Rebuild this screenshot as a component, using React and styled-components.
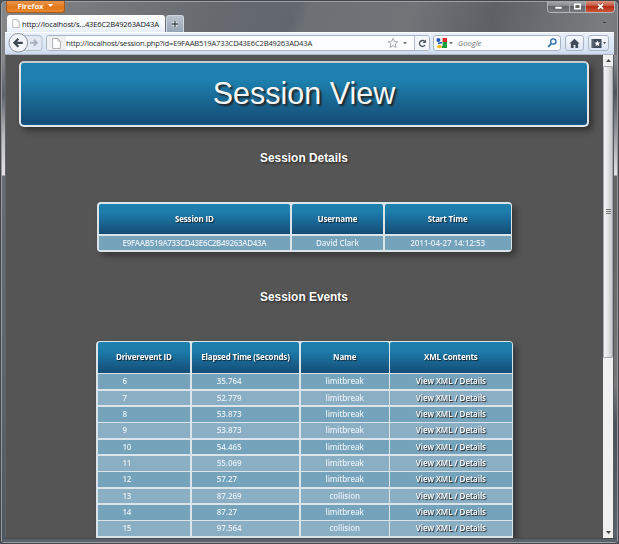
import React from "react";
import styled, { createGlobalStyle } from "styled-components";

const UI = `"Open Sans", "Noto Sans", sans-serif`;
const ARIAL = `"Liberation Sans", Arial, sans-serif`;

const Global = createGlobalStyle`
  *, *::before, *::after { box-sizing: border-box; }
  body { margin: 0; overflow: hidden; background: #50555c; }
`;

const BrowserWindow = styled.div`
  width: 619px;
  height: 544px;
  display: flex;
  flex-direction: column;
  overflow: hidden;
  border: 1px solid #44474b;
  border-radius: 5px 5px 4px 4px;
  box-shadow: inset 0 0 0 1px #9c9fa3;
  background: linear-gradient(105deg, #858789 0, #74777a 110px, #65696e 220px, #62676d 285px, #6d7175 300px, #707477 400px, #5d6166 480px, #7b7e80 590px, #6d7073 619px);
`;

const TitleBar = styled.header`
  height: 14px;
  flex: none;
  display: flex;
  justify-content: space-between;
  align-items: flex-start;
  padding: 0 3px 0 5px;
`;

const FirefoxButton = styled.button`
  width: 59px;
  height: 12px;
  padding: 0 0 2px;
  display: flex;
  align-items: center;
  justify-content: center;
  gap: 5px;
  border: 1px solid #a65a1e;
  border-top: 0;
  border-radius: 0 0 3px 3px;
  background: linear-gradient(#e8954a, #e2761b 60%, #e98a2c);
  color: #fff3e4;
  font: 700 7.8px/10px ${UI};
  letter-spacing: -0.2px;
`;

const WindowControls = styled.div`
  display: flex;
  height: 12px;
  border: 1px solid #b3b5b8;
  border-top: 0;
  border-radius: 0 0 4px 4px;
  overflow: hidden;
`;

const ControlButton = styled.button`
  width: ${(p) => p.$w}px;
  padding: 0;
  display: grid;
  place-items: center;
  border: 0;
  border-left: ${(p) => (p.$first ? 0 : "1px solid #a8aaad")};
  background: ${(p) =>
    p.$close
      ? "linear-gradient(#d89482, #c9543c 45%, #b42c12 50%, #d0563a)"
      : "linear-gradient(#a8abae, #85898d 45%, #62666b 50%, #777b80)"};
`;

const TabStrip = styled.nav`
  height: 17px;
  flex: none;
  display: flex;
  align-items: stretch;
  padding: 0 12px 0 6px;
`;

const Tab = styled.div`
  width: 158px;
  display: flex;
  align-items: center;
  gap: 2px;
  padding-left: 5px;
  border-radius: 3px 3px 0 0;
  background: linear-gradient(#fff, #f5f9fe 50%, #e8eff9);
  color: #222;
  font: 7.6px/16px ${UI};
  letter-spacing: ${(p) => p.$ls}px;
  white-space: nowrap;
`;

const NewTab = styled.button`
  width: 18px;
  margin-left: 1px;
  padding: 0;
  display: grid;
  place-items: center;
  border: 1px solid #d0d7e0;
  border-bottom: 0;
  border-radius: 3px 3px 0 0;
  background: linear-gradient(#b9c2ce, #98a5b6);
`;

const TabMenuMark = styled.span`
  width: 3px;
  height: 1px;
  margin: 7px 0 0 auto;
  background: #3d4043;
`;

const Toolbar = styled.div`
  height: 23px;
  flex: none;
  margin: 0 4px;
  display: flex;
  align-items: center;
  padding: 0 4px 1px 3px;
  border-top: 1px solid #fafcff;
  border-bottom: 1px solid #aab4c4;
  background: linear-gradient(#e9f0fa, #d8e3f3 80%, #cbd8ec);
`;

const NavArrows = styled.svg`
  width: 36px;
  height: 22px;
  flex: none;
`;

const Field = styled.div`
  width: ${(p) => p.$w}px;
  height: 16px;
  margin-left: ${(p) => p.$ml}px;
  display: flex;
  align-items: center;
  border: 1px solid #a9b3c1;
  border-radius: 3px;
  background: #fbfdff;
  overflow: hidden;
`;

const SiteIdentity = styled.span`
  width: 19px;
  height: 100%;
  display: grid;
  place-items: center;
  background: #eeeff1;
`;

const UrlText = styled.span`
  flex: 1;
  color: #2e2e2e;
  font: 7.6px/14px ${UI};
  letter-spacing: -0.19px;
  white-space: nowrap;
`;

const ReloadCell = styled.span`
  width: 15px;
  height: 100%;
  margin-left: 4px;
  display: grid;
  place-items: center;
  border-left: 1px solid #b5bdc9;
  background: #f3f7fb;
`;

const SearchHint = styled.span`
  flex: 1;
  padding-left: 4px;
  color: #777;
  font: italic 7.6px/14px ${UI};
`;

const ToolButton = styled.button`
  width: ${(p) => p.$w}px;
  height: 16px;
  margin-left: ${(p) => p.$ml}px;
  padding: 0;
  display: flex;
  align-items: center;
  justify-content: center;
  gap: 1px;
  border: 1px solid #a9b3c1;
  border-radius: 3px;
  background: linear-gradient(#f7faff, #dbe4f2);
`;

const Body = styled.div`
  height: 483px;
  flex: none;
  display: flex;
`;

const SideFrame = styled.div`
  width: 5px;
  flex: none;
  border-left: 1px solid ${(p) => (p.$right ? "#55595d" : "#96989a")};
  border-right: 1px solid ${(p) => (p.$right ? "#96989a" : "#606468")};
  background: ${(p) =>
    p.$right
      ? "linear-gradient(#8a8d90 0, #4e545c 38px, #90949a 75px, #e4e4e4 120px, #666 121px, #666 200px, #777 330px, #4b525b 370px, #59616c 484px)"
      : "linear-gradient(#8b8b8e 0, #5d626b 40px, #b9b9ba 80px, #e8e4e4 120px, #666c78 121px, #5e6573 300px, #4d5663 484px)"};
`;

const BottomFrame = styled.footer`
  flex: 1;
  margin: 0 1px 1px;
  border-top: 1px solid #474b50;
  background: #59616a;
`;

const Viewport = styled.main`
  width: 597px;
  padding: 6px 14px 0 13px;
  display: flex;
  flex-direction: column;
  overflow: hidden;
  background: #555;
`;

const Banner = styled.h1`
  width: 570px;
  height: 66px;
  flex: none;
  margin: 0;
  border: 2px solid #e2e6e9;
  border-top-color: #c4ccd1;
  border-radius: 5px;
  background: linear-gradient(#1d80ae 0, #1d80ae 28%, #144d76 96%, #165a91);
  box-shadow: 4px 4px 6px rgba(0, 0, 0, 0.4);
  color: #f6f6f6;
  font: 400 30.5px/60px ${ARIAL};
  text-align: center;
  text-shadow: 2px 2px 2px #222;
`;

const SectionTitle = styled.h2`
  height: 16px;
  flex: none;
  margin: ${(p) => p.$mt}px 0 0;
  color: #fff;
  font: 700 11.9px/16px ${ARIAL};
  text-align: center;
  text-shadow: 1px 1px 2px #222;
`;

const Table = styled.div`
  width: ${(p) => p.$w}px;
  margin: ${(p) => p.$mt}px 0 0 ${(p) => p.$ml}px;
  flex: none;
  display: grid;
  grid-template-columns: ${(p) => p.$cols};
  grid-template-rows: 30.6px;
  grid-auto-rows: ${(p) => p.$row}px;
  gap: 1.5px;
  padding: 1.5px;
  border-radius: 4px;
  overflow: hidden;
  background: #dbe4e9;
`;

const TableShadow = styled.div`
  display: flex;
  filter: drop-shadow(4px 4px 3px rgba(0, 0, 0, 0.35));
`;

const HeadCell = styled.div`
  border-radius: 2px 2px 0 0;
  background: linear-gradient(#1d80ae 0, #1d7cab 28%, #144d76);
  color: #fff;
  font: 700 8px/29px ${UI};
  letter-spacing: ${(p) => p.$ls ?? -0.17}px;
  text-align: center;
  text-shadow: 1px 1px 1px #123;
  white-space: nowrap;
`;

const Cell = styled.div`
  padding-left: ${(p) => p.$pad ?? 0}px;
  background: ${(p) => (p.$alt ? "#8aafc5" : "#74a3bb")};
  color: #e4edf3;
  font: 600 8px/14px ${UI};
  letter-spacing: ${(p) => p.$ls ?? -0.03}px;
  text-align: ${(p) => (p.$pad ? "left" : "center")};
  white-space: nowrap;
`;

const DetailsLink = styled.a`
  color: #fff;
  letter-spacing: -0.05px;
  text-shadow: 1px 1px 1px #222;
`;

const ScrollBar = styled.div`
  width: 10px;
  flex: none;
  display: flex;
  flex-direction: column;
  align-items: center;
  background: #f0f0f0;
`;

const ScrollEnd = styled.div`
  width: 10px;
  height: 11px;
  display: grid;
  place-items: center;
`;

const ScrollThumb = styled.div`
  width: 10px;
  height: 292px;
  margin-bottom: auto;
  display: grid;
  place-items: center;
  border: 1px solid #a5a7aa;
  border-radius: 1px;
  background: linear-gradient(90deg, #f6f6f6, #e2e3e5 50%, #c5c7ca);
`;

const PageIcon = ({ w = 8, h = 9 }) => (
  <svg width={w} height={h} viewBox="0 0 8 10">
    <path d="M.5.5h4.8L7.5 3v6.5h-7z" fill="#fff" stroke="#a4a4a4" strokeWidth=".8" />
    <path d="M5.2.7V3h2.2" fill="none" stroke="#b9b9b9" strokeWidth=".7" />
  </svg>
);

const Caret = ({ color = "#777", up = false }) => (
  <svg width="5" height="3" viewBox="0 0 5 3">
    <path d={up ? "M0 3h5L2.5 0z" : "M0 0h5L2.5 3z"} fill={color} />
  </svg>
);

const EVENTS = [
  ["6", "35.764", "limitbreak"],
  ["7", "52.779", "limitbreak"],
  ["8", "53.873", "limitbreak"],
  ["9", "53.873", "limitbreak"],
  ["10", "54.465", "limitbreak"],
  ["11", "55.069", "limitbreak"],
  ["12", "57.27", "limitbreak"],
  ["13", "87.269", "collision"],
  ["14", "87.27", "limitbreak"],
  ["15", "97.564", "collision"],
];

export default function App() {
  return (
    <BrowserWindow>
      <Global />
      <TitleBar>
        <FirefoxButton>
          Firefox <Caret color="#fff" />
        </FirefoxButton>
        <WindowControls>
          <ControlButton $w={21} $first aria-label="Minimize">
            <svg width="9" height="11"><rect x="1" y="5.5" width="7" height="2.5" fill="#fff" stroke="#555" strokeWidth=".5" /></svg>
          </ControlButton>
          <ControlButton $w={16} aria-label="Maximize">
            <svg width="9" height="11"><path d="M1.7 3.2h5.6v4.6H1.7z" fill="#666" stroke="#fff" strokeWidth="1.5" /></svg>
          </ControlButton>
          <ControlButton $w={29} $close aria-label="Close">
            <svg width="9" height="11"><path d="M2 3l5 5M7 3L2 8" stroke="#6e2a1d" strokeWidth="2.8" /><path d="M2 3l5 5M7 3L2 8" stroke="#fff" strokeWidth="1.8" /></svg>
          </ControlButton>
        </WindowControls>
      </TitleBar>

      <TabStrip>
        <Tab $ls={-0.17}>
          <PageIcon />
          http://localhost/s...43E6C2B49263AD43A
        </Tab>
        <NewTab aria-label="New tab">
          <svg width="8" height="8"><path d="M4 1v6M1 4h6" stroke="#eef2f6" strokeWidth="2.8" /><path d="M4 1v6M1 4h6" stroke="#454d58" strokeWidth="1.4" /></svg>
        </NewTab>
        <TabMenuMark />
      </TabStrip>

      <Toolbar>
        <NavArrows viewBox="0 0 36 22">
          <rect x="14" y="3.5" width="20" height="15" rx="3" fill="#e3e9f2" stroke="#b2bdcc" />
          <circle cx="10.3" cy="10.8" r="9.3" fill="#f2f5fa" stroke="#8b929c" />
          <path d="M14.8 10.8H7M10.4 6.8l-4 4 4 4" fill="none" stroke="#3d4752" strokeWidth="2.2" />
          <path d="M22 10.8h6M25.8 7.8l3 3-3 3" fill="none" stroke="#aab4c0" strokeWidth="2" />
        </NavArrows>
        <Field $w={384} $ml={2}>
          <SiteIdentity><PageIcon w={9} h={11} /></SiteIdentity>
          <UrlText>http://localhost/session.php?id=E9FAAB519A733CD43E6C2B49263AD43A</UrlText>
          <svg width="12" height="12" viewBox="0 0 12 12">
            <path d="M6 1.2l1.4 3.2 3.5.3-2.7 2.3.9 3.5L6 8.7l-3.1 1.8.9-3.5L1.1 4.7l3.5-.3z" fill="#f4f4f4" stroke="#9b9b9b" strokeWidth=".8" />
          </svg>
          <svg width="11" height="3"><path d="M4 0h4L6 2.5z" fill="#777" /></svg>
          <ReloadCell>
            <svg width="9" height="9" viewBox="0 0 9 9">
              <path d="M7 6.2A3 3 0 1 1 6.6 2.3" fill="none" stroke="#4d555f" strokeWidth="1.3" />
              <path d="M8 .6v3.5H4.6z" fill="#4d555f" />
            </svg>
          </ReloadCell>
        </Field>
        <Field $w={128} $ml={3}>
          <svg width="14" height="12" viewBox="0 0 14 12">
            <path d="M7 1h6v5H7z" fill="#dc2d22" />
            <path d="M8 5h5v6H8z" fill="#1c9d42" />
            <path d="M5 0h3.6v9H5z" fill="#fff" />
            <ellipse cx="4.4" cy="3" rx="2" ry="1.9" fill="#1d56b8" />
            <path d="M4 6.6l4-1.2" stroke="#1d56b8" strokeWidth="1.6" />
            <ellipse cx="5.4" cy="9.6" rx="2.6" ry="1.6" fill="#f3bb1b" />
          </svg>
          <svg width="6" height="3"><path d="M1 0h4L3 2.5z" fill="#777" /></svg>
          <SearchHint>Google</SearchHint>
          <svg width="14" height="12" viewBox="0 0 14 12">
            <circle cx="7.3" cy="4.5" r="2.7" fill="#eef6fc" stroke="#2b6da8" strokeWidth="1.3" />
            <path d="M5.2 6.7L2.2 10" stroke="#2b6da8" strokeWidth="1.8" />
          </svg>
        </Field>
        <ToolButton $w={19} $ml={4} aria-label="Home">
          <svg width="11" height="11" viewBox="0 0 11 11"><path d="M5.5.8L.5 5.6h1.4V10h2.7V7h1.8v3h2.7V5.6h1.4z" fill="#3f4b59" /></svg>
        </ToolButton>
        <ToolButton $w={21} $ml={4} aria-label="Bookmarks">
          <svg width="11" height="11" viewBox="0 0 11 11">
            <path d="M.5 1h10v9H.5z" fill="#3f4b59" />
            <path d="M2 1v9" stroke="#8a94a0" strokeWidth=".6" />
            <path d="M6.4 2.4l.9 2 2.2.2-1.7 1.5.5 2.2-1.9-1.2-1.9 1.2.5-2.2-1.7-1.5 2.2-.2z" fill="#fff" />
          </svg>
          <svg width="3" height="2"><path d="M0 0h3L1.5 2z" fill="#444" /></svg>
        </ToolButton>
      </Toolbar>

      <Body>
        <SideFrame />
        <Viewport>
          <Banner>Session View</Banner>
          <SectionTitle $mt={23}>Session Details</SectionTitle>
          <TableShadow>
            <Table $w={415} $mt={36} $ml={78} $cols="191.7px 91.5px 1fr" $row={14.5}>
              <HeadCell>Session ID</HeadCell>
              <HeadCell>Username</HeadCell>
              <HeadCell>Start Time</HeadCell>
              <Cell $ls={-0.34}>E9FAAB519A733CD43E6C2B49263AD43A</Cell>
              <Cell $ls={-0.1}>David Clark</Cell>
              <Cell $ls={-0.05}>2011-04-27 14:12:53</Cell>
            </Table>
          </TableShadow>
          <SectionTitle $mt={37}>Session Events</SectionTitle>
          <TableShadow>
            <Table $w={417} $mt={36} $ml={77} $cols="92.7px 107.5px 88px 1fr" $row={14.85}>
              <HeadCell>Driverevent ID</HeadCell>
              <HeadCell>Elapsed Time (Seconds)</HeadCell>
              <HeadCell>Name</HeadCell>
              <HeadCell>XML Contents</HeadCell>
              {EVENTS.map(([id, time, name], i) => (
                <React.Fragment key={id}>
                  <Cell $alt={i % 2 === 1} $pad={25} $ls={-0.3}>{id}</Cell>
                  <Cell $alt={i % 2 === 1} $pad={25}>{time}</Cell>
                  <Cell $alt={i % 2 === 1} $ls={-0.15}>{name}</Cell>
                  <Cell $alt={i % 2 === 1}><DetailsLink>View XML / Details</DetailsLink></Cell>
                </React.Fragment>
              ))}
              <Cell /><Cell /><Cell /><Cell />
            </Table>
          </TableShadow>
        </Viewport>
        <ScrollBar>
          <ScrollEnd><Caret up color="#444" /></ScrollEnd>
          <ScrollThumb>
            <svg width="5" height="6"><path d="M0 .5h5M0 2.5h5M0 4.5h5" stroke="#777" /></svg>
          </ScrollThumb>
          <ScrollEnd><Caret color="#444" /></ScrollEnd>
        </ScrollBar>
        <SideFrame $right />
      </Body>
      <BottomFrame />
    </BrowserWindow>
  );
}
